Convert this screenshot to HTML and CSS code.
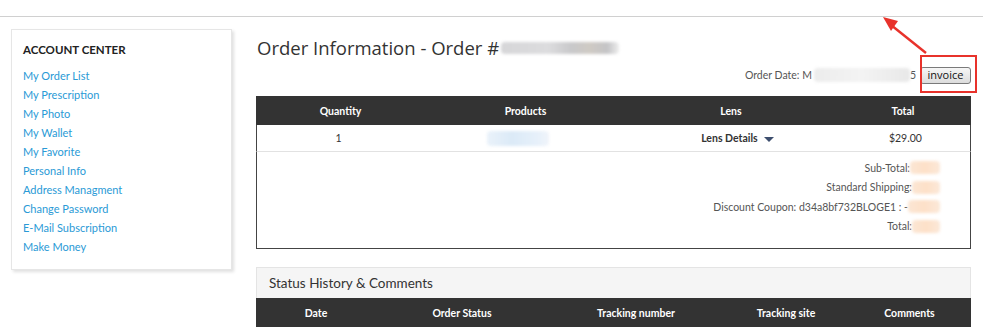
FILE: index.html
```html
<!DOCTYPE html>
<html lang="en">
<head>
  <meta charset="UTF-8">
  <title>Order Information</title>
  <link rel="stylesheet" href="styles.css">
</head>
<body>
  <div class="topbar"></div>

  <div class="page">
    <!-- Sidebar -->
    <aside class="sidebar">
      <h3>ACCOUNT CENTER</h3>
      <ul>
        <li><a href="#">My Order List</a></li>
        <li><a href="#">My Prescription</a></li>
        <li><a href="#">My Photo</a></li>
        <li><a href="#">My Wallet</a></li>
        <li><a href="#">My Favorite</a></li>
        <li><a href="#">Personal Info</a></li>
        <li><a href="#">Address Managment</a></li>
        <li><a href="#">Change Password</a></li>
        <li><a href="#">E-Mail Subscription</a></li>
        <li><a href="#">Make Money</a></li>
      </ul>
    </aside>

    <!-- Order content -->
    <main class="content">
      <h1 class="title">Order Information - Order #<span class="blur blur-order"></span></h1>

      <div class="order-date">
        <span>Order Date: M</span><span class="blur blur-date"></span><span>5</span>
        <button class="invoice-btn">invoice</button>
        <span class="highlight"></span>
        <svg class="arrow" width="60" height="50" viewBox="0 0 60 50">
          <line x1="46" y1="38" x2="11" y2="10" stroke="#e8322b" stroke-width="2.5"/>
          <polygon points="3,2 18,6 11,16" fill="#e8322b"/>
        </svg>
      </div>

      <div class="order-table">
        <div class="thead">
          <div class="c-qty">Quantity</div>
          <div class="c-prod">Products</div>
          <div class="c-lens">Lens</div>
          <div class="c-total">Total</div>
        </div>
        <div class="trow">
          <div class="c-qty">1</div>
          <div class="c-prod"><span class="blur blur-prod"></span></div>
          <div class="c-lens lens-details">Lens Details <span class="caret"></span></div>
          <div class="c-total">$29.00</div>
        </div>
        <div class="totals">
          <div class="line"><span>Sub-Total: </span><span class="blur blur-peach w30"></span></div>
          <div class="line"><span>Standard Shipping:</span><span class="blur blur-peach w28"></span></div>
          <div class="line"><span>Discount Coupon: d34a8bf732BLOGE1 : -</span><span class="blur blur-peach w32"></span></div>
          <div class="line"><span>Total:</span><span class="blur blur-peach w28"></span></div>
        </div>
      </div>

      <section class="status">
        <h2>Status History &amp; Comments</h2>
        <div class="thead status-head">
          <div class="s-date">Date</div>
          <div class="s-status">Order Status</div>
          <div class="s-num">Tracking number</div>
          <div class="s-site">Tracking site</div>
          <div class="s-comm">Comments</div>
        </div>
      </section>
    </main>
  </div>
</body>
</html>
```

FILE: styles.css
```css
body {
  font-family: Lato, "Open Sans", sans-serif;
  background-color: #fff;
  color: #333;
  margin: 0;
  padding: 0;
  overflow: hidden;
}

.topbar {
  height: 16px;
  border-bottom: 1px solid #d0d0d0;
}

.page {
  display: flex;
  align-items: flex-start;
  padding: 12px 12px 0 11px;
}

/* Sidebar */
.sidebar {
  width: 208px;
  height: 239px;
  border: 1px solid #e6e6e6;
  box-shadow: 2px 2px 3px #e0e0e0;
  padding: 0 0 0 11px;
}

.sidebar h3 {
  font-size: 11.5px;
  font-weight: bold;
  color: #222;
  margin: 12px 0 8px;
  line-height: 16px;
}

.sidebar ul {
  list-style-type: none;
  margin: 0;
  padding: 0;
}

.sidebar li {
  line-height: 19px;
  font-size: 11px;
}

.sidebar a {
  color: #2a9ad6;
  text-decoration: none;
}

/* Content */
.content {
  margin-left: 24px;
  width: 715px;
}

.title {
  font-family: "Open Sans", sans-serif;
  font-size: 18.5px;
  font-weight: normal;
  color: #333;
  margin: 6px 0 0 1px;
  line-height: 26px;
  display: flex;
  align-items: center;
}

.blur {
  display: inline-block;
  filter: blur(1.5px);
  border-radius: 4px;
}

.blur-order {
  width: 118px;
  height: 12px;
  margin-left: 2px;
  background: linear-gradient(90deg, #d6d6d8 0%, #dcdcde 40%, #c8c8ca 60%, #cfcac4 75%, #c4c4c6 90%, #eee 100%);
}

.order-date {
  position: relative;
  display: flex;
  justify-content: flex-end;
  align-items: center;
  font-size: 10.5px;
  color: #555;
  height: 22px;
  margin-top: 3px;
}

.blur-date {
  width: 96px;
  height: 14px;
  margin-left: 2px;
  background: linear-gradient(90deg, #ececec, #f3f3f3 50%, #e8e8e8);
}

.invoice-btn {
  font-family: "Open Sans", sans-serif;
  font-size: 11px;
  color: #111;
  margin-left: 4px;
  width: 51px;
  height: 17px;
  padding: 0;
  border: 1px solid #7a7a7a;
  border-radius: 3px;
  background: linear-gradient(#f6f6f6, #dcdcdc);
  line-height: 14px;
}

.highlight {
  position: absolute;
  right: -6px;
  top: -9px;
  width: 53px;
  height: 34px;
  border: 2px solid #e8322b;
}

.arrow {
  position: absolute;
  right: 31px;
  top: -49px;
}

/* Order table */
.order-table {
  margin-top: 10px;
  font-size: 10.5px;
}

.thead {
  display: flex;
  background-color: #333;
  color: #fff;
  font-weight: bold;
  height: 29px;
  align-items: center;
  text-align: center;
}

.trow {
  display: flex;
  height: 26px;
  align-items: center;
  text-align: center;
  border-left: 1px solid #444;
  border-right: 1px solid #444;
  border-bottom: 1px solid #e2e2e2;
}

.c-qty { width: 169px; }
.c-prod { width: 201px; }
.c-lens { width: 210px; }
.c-total { width: 134px; }

.trow .c-qty { width: 168px; }
.trow .c-total { width: 133px; padding-left: 1px; }

.blur-prod {
  width: 62px;
  height: 15px;
  background: linear-gradient(90deg, #eaf2fa, #dbeaf7 40%, #e6f0fa 80%, #f0f4fa);
  vertical-align: middle;
}

.lens-details {
  font-weight: bold;
  color: #333;
  padding-left: 20px;
}

.caret {
  display: inline-block;
  width: 0;
  height: 0;
  border-left: 5px solid transparent;
  border-right: 5px solid transparent;
  border-top: 5px solid #3d4e6e;
  margin-left: 4px;
  vertical-align: middle;
}

.totals {
  border-left: 1px solid #444;
  border-right: 1px solid #444;
  border-bottom: 1px solid #444;
  height: 97px;
  padding: 6px 30px 0 0;
  box-sizing: border-box;
  color: #555;
}

.totals .line {
  display: flex;
  justify-content: flex-end;
  align-items: center;
  height: 19.5px;
}

.blur-peach {
  height: 13px;
  background: linear-gradient(90deg, #fbe6d4, #fde0c8 50%, #fbe8d8);
}

.w28 { width: 28px; }
.w30 { width: 30px; }
.w32 { width: 32px; }

/* Status history */
.status {
  margin-top: 18px;
  background-color: #f5f5f5;
  border: 1px solid #e4e4e4;
  border-bottom: none;
  font-size: 10.5px;
}

.status h2 {
  font-size: 13.5px;
  font-weight: normal;
  color: #333;
  margin: 0;
  padding: 0 12px;
  height: 30px;
  line-height: 30px;
}

.status-head {
  margin: 0 -1px;
}

.s-date { width: 120px; }
.s-status { width: 172px; }
.s-num { width: 176px; }
.s-site { width: 124px; }
.s-comm { width: 123px; }
```
